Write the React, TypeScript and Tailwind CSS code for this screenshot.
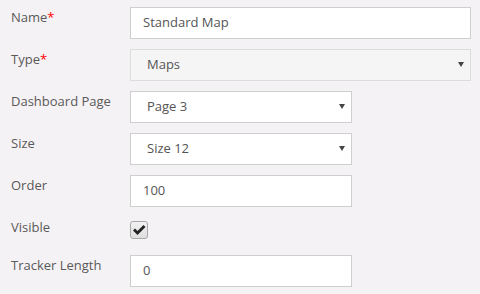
import type { ReactNode } from "react"

const font = { fontFamily: '"Open Sans", "Liberation Sans", sans-serif' }

function Row({ label, required, children }: { label: string; required?: boolean; children: ReactNode }) {
  return (
    <div className="flex items-start mb-[10px]">
      <label className="w-[119px] shrink-0 text-[13px] leading-[20px] text-[#595959]">
        {label}
        {required && <span className="text-[#ff0000]">*</span>}
      </label>
      {children}
    </div>
  )
}

function TextBox({ value, wide }: { value: string; wide?: boolean }) {
  return (
    <div
      className={`${wide ? "w-[341px]" : "w-[222px]"} h-[32px] border border-[#cfcfcf] bg-white flex items-center pl-[12px] text-[13px] text-[#555]`}
    >
      {value}
    </div>
  )
}

function SelectBox({ value, wide, disabled }: { value: string; wide?: boolean; disabled?: boolean }) {
  return (
    <div
      className={`${wide ? "w-[341px]" : "w-[222px]"} h-[32px] border ${disabled ? "border-[#dcdcdc] bg-[#f5f5f5]" : "border-[#cfcfcf] bg-white"} flex items-center justify-between pl-[16px] pr-[6px] text-[13px] text-[#555]`}
    >
      <span>{value}</span>
      <svg width="6" height="5" viewBox="0 0 6 5" className="mb-[2px]">
        <path d="M0 0h6L3 5z" fill="#444" />
      </svg>
    </div>
  )
}

export default function App() {
  return (
    <div className="w-[480px] h-[294px] bg-[#f5f2f5] pl-[11px] pt-[7px]" style={font}>
      <Row label="Name" required>
        <TextBox value="Standard Map" wide />
      </Row>
      <Row label="Type" required>
        <SelectBox value="Maps" wide disabled />
      </Row>
      <Row label="Dashboard Page">
        <SelectBox value="Page 3" />
      </Row>
      <Row label="Size">
        <SelectBox value="Size 12" />
      </Row>
      <Row label="Order">
        <TextBox value="100" />
      </Row>
      <div className="flex items-start h-[28px] mb-[10px]">
        <label className="w-[119px] shrink-0 text-[13px] leading-[20px] text-[#595959]">Visible</label>
        <div className="mt-[4px] w-[18px] h-[18px] rounded-[3px] border border-[#a9a9a9] bg-gradient-to-b from-[#f2f2f2] to-[#dedede] flex items-center justify-center">
          <svg width="13" height="11" viewBox="0 0 13 11">
            <path d="M0 5.5l2-2 2.5 2.5L10.5 0l2 2-8 8z" fill="#222" />
          </svg>
        </div>
      </div>
      <Row label="Tracker Length">
        <TextBox value="0" />
      </Row>
    </div>
  )
}
